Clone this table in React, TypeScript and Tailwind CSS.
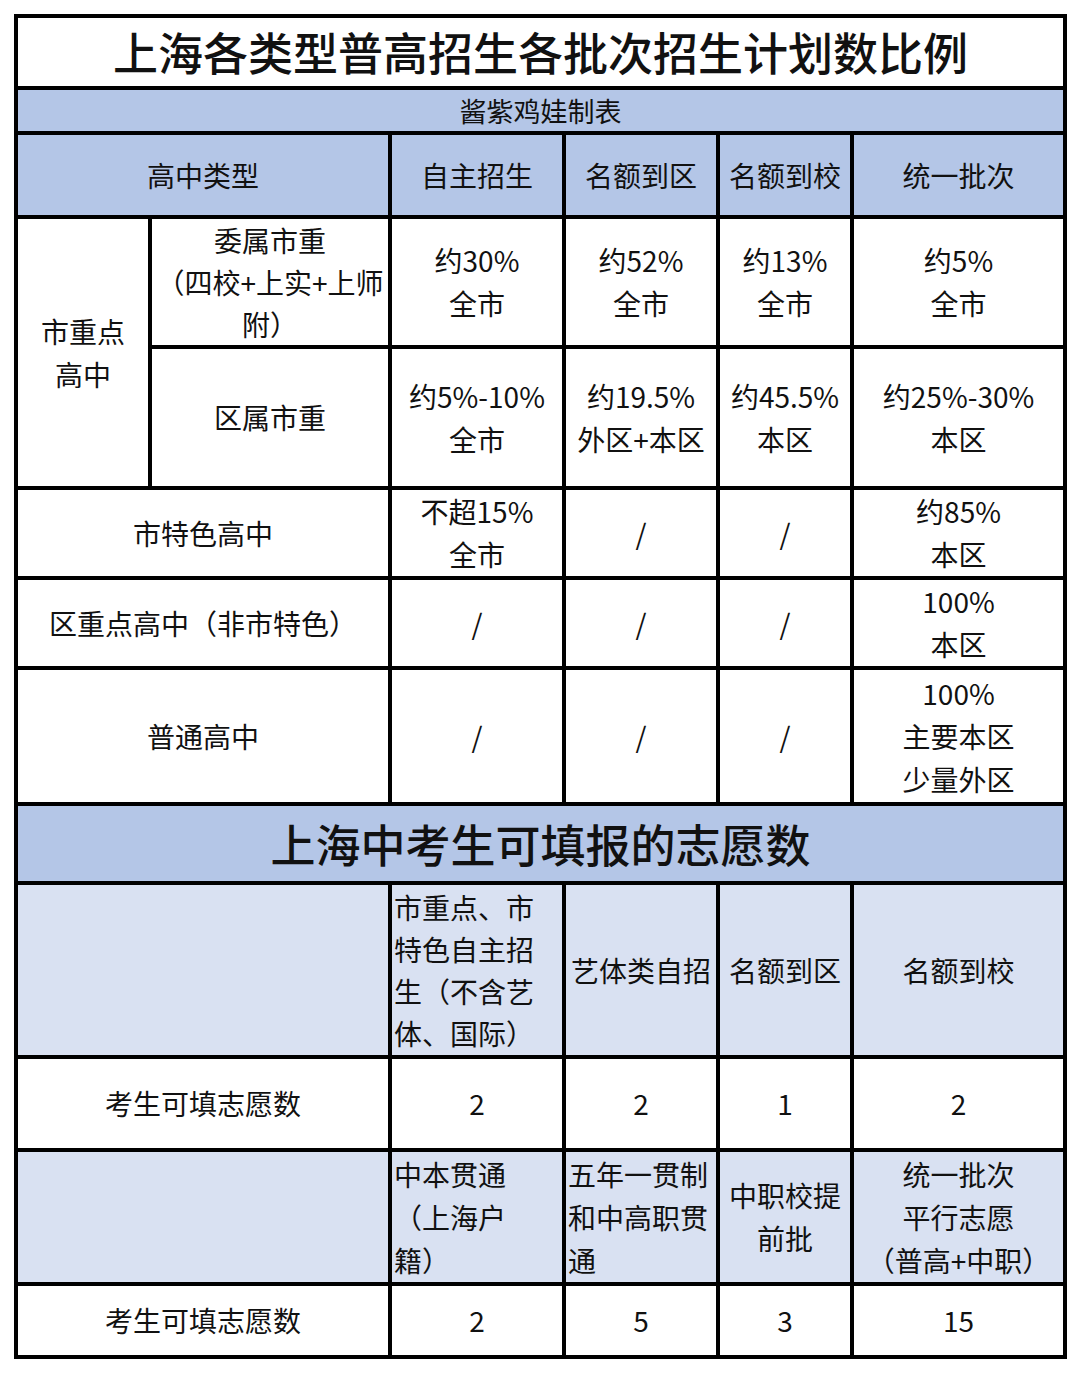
import type { ReactNode } from 'react';

const font = { fontFamily: '"Noto Sans CJK SC", "Noto Sans", sans-serif' };

type CellProps = {
  children?: ReactNode;
  className?: string;
  colSpan?: number;
  rowSpan?: number;
  left?: boolean;
  size?: string;
};

function Cell({
  children,
  className = '',
  colSpan,
  rowSpan,
  left,
  size = 'text-[28px] leading-[43px]',
}: CellProps) {
  return (
    <td
      colSpan={colSpan}
      rowSpan={rowSpan}
      className={`border-[4px] border-black p-0 align-middle ${size} ${
        left ? 'text-left pl-[2px]' : 'text-center'
      } ${className}`}
    >
      {children}
    </td>
  );
}

function Lines({ items }: { items: string[] }) {
  return (
    <>
      {items.map((t, i) => (
        <div key={i}>{t}</div>
      ))}
    </>
  );
}

const head = 'bg-[#b4c6e7]';
const light = 'bg-[#d9e1f2]';

export default function App(): JSX.Element {
  return (
    <div className="w-[1080px] h-[1373px] bg-white pt-[14px] pl-[14px] text-[#111]" style={font}>
      <table className="table-fixed border-collapse w-[1049px]">
        <colgroup>
          <col className="w-[134px]" />
          <col className="w-[240px]" />
          <col className="w-[174px]" />
          <col className="w-[154px]" />
          <col className="w-[134px]" />
          <col className="w-[213px]" />
        </colgroup>
        <tbody>
          <tr className="h-[72px]">
            <Cell colSpan={6} size="text-[45px] leading-[56px]" className="font-medium">
              上海各类型普高招生各批次招生计划数比例
            </Cell>
          </tr>
          <tr className="h-[45px]">
            <Cell colSpan={6} size="text-[27px] leading-[34px]" className={head}>
              酱紫鸡娃制表
            </Cell>
          </tr>
          <tr className="h-[84px]">
            <Cell colSpan={2} className={head}>高中类型</Cell>
            <Cell className={head}>自主招生</Cell>
            <Cell className={head}>名额到区</Cell>
            <Cell className={head}>名额到校</Cell>
            <Cell className={head}>统一批次</Cell>
          </tr>
          <tr className="h-[130px]">
            <Cell rowSpan={2}>
              <Lines items={['市重点', '高中']} />
            </Cell>
            <Cell size="text-[28px] leading-[42px]">
              <Lines items={['委属市重', '（四校+上实+上师', '附）']} />
            </Cell>
            <Cell><Lines items={['约30%', '全市']} /></Cell>
            <Cell><Lines items={['约52%', '全市']} /></Cell>
            <Cell><Lines items={['约13%', '全市']} /></Cell>
            <Cell><Lines items={['约5%', '全市']} /></Cell>
          </tr>
          <tr className="h-[141px]">
            <Cell>区属市重</Cell>
            <Cell><Lines items={['约5%-10%', '全市']} /></Cell>
            <Cell><Lines items={['约19.5%', '外区+本区']} /></Cell>
            <Cell><Lines items={['约45.5%', '本区']} /></Cell>
            <Cell><Lines items={['约25%-30%', '本区']} /></Cell>
          </tr>
          <tr className="h-[90px]">
            <Cell colSpan={2}>市特色高中</Cell>
            <Cell><Lines items={['不超15%', '全市']} /></Cell>
            <Cell>/</Cell>
            <Cell>/</Cell>
            <Cell><Lines items={['约85%', '本区']} /></Cell>
          </tr>
          <tr className="h-[90px]">
            <Cell colSpan={2}>区重点高中（非市特色）</Cell>
            <Cell>/</Cell>
            <Cell>/</Cell>
            <Cell>/</Cell>
            <Cell><Lines items={['100%', '本区']} /></Cell>
          </tr>
          <tr className="h-[136px]">
            <Cell colSpan={2}>普通高中</Cell>
            <Cell>/</Cell>
            <Cell>/</Cell>
            <Cell>/</Cell>
            <Cell><Lines items={['100%', '主要本区', '少量外区']} /></Cell>
          </tr>
          <tr className="h-[79px]">
            <Cell colSpan={6} size="text-[45px] leading-[56px]" className={`${head} font-medium`}>
              上海中考生可填报的志愿数
            </Cell>
          </tr>
          <tr className="h-[174px]">
            <Cell colSpan={2} className={light} />
            <Cell left size="text-[28px] leading-[42px]" className={light}>
              <Lines items={['市重点、市', '特色自主招', '生（不含艺', '体、国际）']} />
            </Cell>
            <Cell className={light}>艺体类自招</Cell>
            <Cell className={light}>名额到区</Cell>
            <Cell className={light}>名额到校</Cell>
          </tr>
          <tr className="h-[93px]">
            <Cell colSpan={2}>考生可填志愿数</Cell>
            <Cell>2</Cell>
            <Cell>2</Cell>
            <Cell>1</Cell>
            <Cell>2</Cell>
          </tr>
          <tr className="h-[134px]">
            <Cell colSpan={2} className={light} />
            <Cell left className={light}>
              <Lines items={['中本贯通', '（上海户', '籍）']} />
            </Cell>
            <Cell left className={light}>
              <Lines items={['五年一贯制', '和中高职贯', '通']} />
            </Cell>
            <Cell className={light}>
              <Lines items={['中职校提', '前批']} />
            </Cell>
            <Cell className={light}>
              <Lines items={['统一批次', '平行志愿', '（普高+中职）']} />
            </Cell>
          </tr>
          <tr className="h-[73px]">
            <Cell colSpan={2}>考生可填志愿数</Cell>
            <Cell>2</Cell>
            <Cell>5</Cell>
            <Cell>3</Cell>
            <Cell>15</Cell>
          </tr>
        </tbody>
      </table>
    </div>
  );
}
